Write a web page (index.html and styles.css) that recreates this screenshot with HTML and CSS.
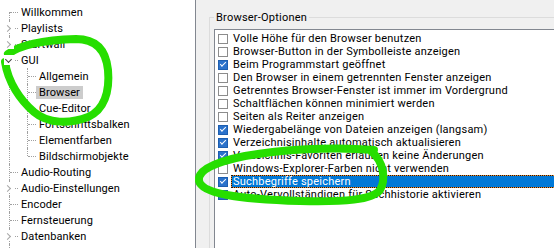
FILE: index.html
```html
<!DOCTYPE html>
<html lang="de">
<head>
<meta charset="utf-8">
<title>Browser-Optionen</title>
<link rel="stylesheet" href="styles.css">
</head>
<body>
<div class="app">
  <div class="tree">
    <div class="row"><span class="gut first"></span><span class="label">Willkommen</span></div>
    <div class="row"><span class="gut"><span class="chev"></span></span><span class="label">Playlists</span></div>
    <div class="row"><span class="gut"><span class="chev"></span></span><span class="label">Startwall</span></div>
    <div class="row"><span class="gut"><span class="chev open"></span></span><span class="label">GUI</span></div>
    <div class="row"><span class="gut pass"></span><span class="gut"></span><span class="label">Allgemein</span></div>
    <div class="row"><span class="gut pass"></span><span class="gut"></span><span class="label sel">Browser</span></div>
    <div class="row"><span class="gut pass"></span><span class="gut"></span><span class="label">Cue-Editor</span></div>
    <div class="row"><span class="gut pass"></span><span class="gut"></span><span class="label">Fortschrittsbalken</span></div>
    <div class="row"><span class="gut pass"></span><span class="gut"></span><span class="label">Elementfarben</span></div>
    <div class="row"><span class="gut pass"></span><span class="gut last"></span><span class="label">Bildschirmobjekte</span></div>
    <div class="row"><span class="gut"></span><span class="label">Audio-Routing</span></div>
    <div class="row"><span class="gut"><span class="chev"></span></span><span class="label">Audio-Einstellungen</span></div>
    <div class="row"><span class="gut"></span><span class="label">Encoder</span></div>
    <div class="row"><span class="gut"></span><span class="label">Fernsteuerung</span></div>
    <div class="row"><span class="gut"><span class="chev"></span></span><span class="label">Datenbanken</span></div>
    <div class="row"><span class="gut pass"></span></div>
  </div>
  <div class="pane">
    <fieldset class="group">
      <legend>Browser-Optionen</legend>
      <div class="list">
        <div class="item"><span class="cb"></span><span class="text">Volle Höhe für den Browser benutzen</span></div>
        <div class="item"><span class="cb"></span><span class="text">Browser-Button in der Symbolleiste anzeigen</span></div>
        <div class="item"><span class="cb on"></span><span class="text">Beim Programmstart geöffnet</span></div>
        <div class="item"><span class="cb"></span><span class="text">Den Browser in einem getrennten Fenster anzeigen</span></div>
        <div class="item"><span class="cb"></span><span class="text">Getrenntes Browser-Fenster ist immer im Vordergrund</span></div>
        <div class="item"><span class="cb"></span><span class="text">Schaltflächen können minimiert werden</span></div>
        <div class="item"><span class="cb"></span><span class="text">Seiten als Reiter anzeigen</span></div>
        <div class="item"><span class="cb on"></span><span class="text">Wiedergabelänge von Dateien anzeigen (langsam)</span></div>
        <div class="item"><span class="cb on"></span><span class="text">Verzeichnisinhalte automatisch aktualisieren</span></div>
        <div class="item"><span class="cb on"></span><span class="text">Verzeichnis-Favoriten erlauben keine Änderungen</span></div>
        <div class="item"><span class="cb"></span><span class="text">Windows-Explorer-Farben nicht verwenden</span></div>
        <div class="item"><span class="cb on"></span><span class="text focus">Suchbegriffe speichern</span></div>
        <div class="item"><span class="cb on"></span><span class="text">Auto-Vervollständigen für Suchhistorie aktivieren</span></div>
      </div>
    </fieldset>
  </div>
</div>
<svg class="ink" width="554" height="248" viewBox="0 0 554 248">
  <path d="M8 54 C 20 45, 45 40, 76 39 C 96 39, 106 50, 108 70 C 110 92, 104 110, 88 117 C 70 124, 48 124, 34 112 C 20 100, 8 82, 5 62" />
  <path d="M374 150 C 330 146, 280 150, 245 156 C 215 162, 197 170, 199 181 C 202 193, 235 199, 300 201 C 345 202, 372 200, 380 190 C 386 180, 384 162, 372 152" />
</svg>
</body>
</html>
```

FILE: styles.css
```css
html, body {
  margin: 0;
  height: 248px;
  overflow: hidden;
  background: #f0f0f0;
}

body {
  position: relative;
  font-family: Roboto, "Noto Sans", sans-serif;
  font-size: 11px;
  color: #000;
}

.app {
  display: flex;
  height: 248px;
}

/* ---------- tree ---------- */
.tree {
  flex: none;
  width: 195px;
  background: #fff;
  border-right: 1px solid #828790;
  padding-top: 4px;
  overflow: hidden;
  letter-spacing: 0.1px;
}

.row {
  display: flex;
  align-items: center;
  height: 16px;
}

.gut {
  position: relative;
  flex: none;
  width: 18px;
  height: 16px;
}

.gut::before {
  content: "";
  position: absolute;
  left: 9px;
  top: 0;
  bottom: 0;
  border-left: 1px dotted #a0a0a0;
}

.gut::after {
  content: "";
  position: absolute;
  left: 10px;
  top: 8px;
  width: 8px;
  border-top: 1px dotted #a0a0a0;
}

.gut.first::before { top: 8px; }
.gut.last::before { bottom: 8px; }
.gut.pass::after { display: none; }

.chev {
  position: absolute;
  left: 4px;
  top: 3px;
  width: 10px;
  height: 10px;
  background: #fff;
  z-index: 1;
}

.chev::after {
  content: "";
  position: absolute;
  left: 1px;
  top: 2.5px;
  width: 4px;
  height: 4px;
  border-right: 1.3px solid #a6a6a6;
  border-bottom: 1.3px solid #a6a6a6;
  transform: rotate(-45deg);
}

.chev.open::after {
  left: 2px;
  top: 1.5px;
  border-color: #404040;
  transform: rotate(45deg);
}

.label {
  padding: 0 3px;
  line-height: 13px;
  white-space: nowrap;
}

.label.sel {
  background: #cccccc;
}

/* ---------- options pane ---------- */
.pane {
  flex: 1;
  min-width: 0;
  padding-left: 13px;
  overflow: hidden;
  letter-spacing: 0.22px;
}

.group {
  margin: 11px 0 0 0;
  width: 420px;
  height: 300px;
  box-sizing: border-box;
  border: 1px solid #dcdcdc;
  padding: 0 0 0 4px;
}

.group legend {
  padding: 0 2px;
  line-height: 13px;
}

.list {
  margin-top: 5px;
  height: 400px;
  background: #fff;
  border: 1px solid #828790;
  padding: 2px 0 0 3px;
}

.item {
  display: flex;
  align-items: center;
  height: 13px;
}

.cb {
  flex: none;
  display: flex;
  align-items: center;
  justify-content: center;
  width: 10px;
  height: 10px;
  box-sizing: border-box;
  border: 1px solid #8c8c8c;
  background: #fff;
}

.cb.on {
  background: #2b72cb;
  border-color: #1d5eb0;
}

.cb.on::after {
  content: "";
  width: 5px;
  height: 2px;
  margin-top: -2px;
  border-left: 1.3px solid #fff;
  border-bottom: 1.3px solid #fff;
  transform: rotate(-45deg);
}

.text {
  margin-left: 3px;
  padding: 0 2px;
  line-height: 13px;
  white-space: nowrap;
}

.text.focus {
  flex: 1;
  box-sizing: border-box;
  height: 13px;
  line-height: 11px;
  padding: 0 1px;
  color: #fff;
  border: 1px dotted #1a1a1a;
  background:
    linear-gradient(#0078d7, #0078d7) padding-box,
    linear-gradient(#f08a2a, #f08a2a) border-box;
}

/* ---------- annotation ink ---------- */
.ink {
  position: absolute;
  left: 0;
  top: 0;
  pointer-events: none;
}

.ink path {
  fill: none;
  stroke: #26de00;
  stroke-width: 8;
  stroke-linecap: round;
  stroke-linejoin: round;
}
```
